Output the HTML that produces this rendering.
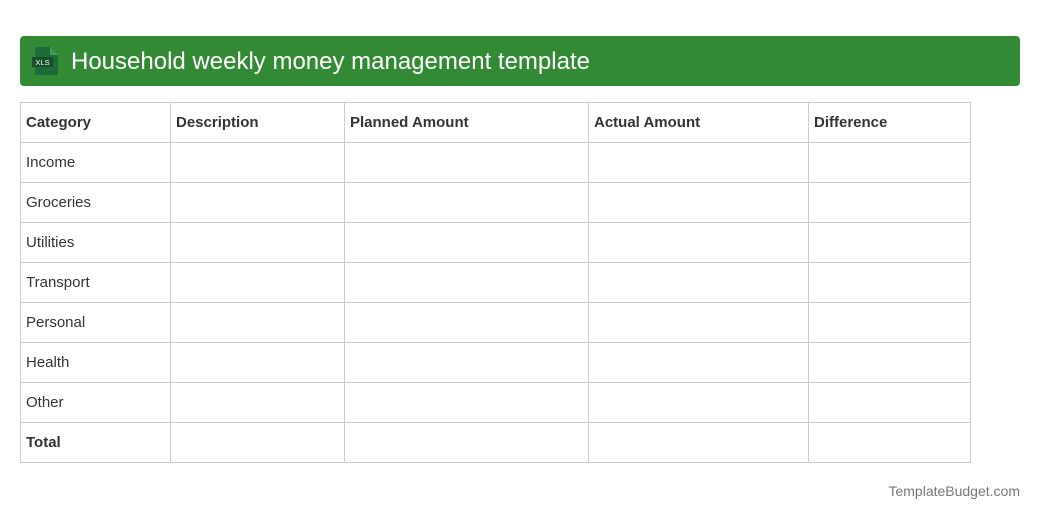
<!DOCTYPE html>
<html><head><meta charset="utf-8"><style>
body{margin:0;width:1040px;height:520px;background:#fff;font-family:"Liberation Sans",sans-serif;position:relative;overflow:hidden}
.hdr{position:absolute;left:20px;top:36px;width:1000px;height:50px;background:#338a34;border-radius:4px}
.hdr .t{position:absolute;left:51px;top:12px;color:#fff;font-size:24px;line-height:28px}
.ic{position:absolute;left:11px;top:10px}
table{position:absolute;left:20px;top:102px;border-collapse:collapse;font-size:15px;color:#333;table-layout:fixed;width:950px}
td{border:1px solid #ccc;height:40px;padding:0 0 0 5px;box-sizing:border-box}
tr{height:40px}
tr:first-child td{font-weight:bold}
.ft{position:absolute;right:20px;top:483px;font-size:14px;color:#777}
</style></head><body>
<div class="hdr">
<svg class="ic" width="30" height="30" viewBox="0 0 30 30"><path d="M4 1h15l8 8v20H4z" fill="#1e6b3a"/><path d="M19 1v8h8z" fill="#3f9a5c"/><rect x="1" y="11" width="21" height="10" fill="#174f2a"/><text x="11.5" y="19" font-size="7.5" fill="#fff" text-anchor="middle" font-family="Liberation Sans">XLS</text></svg>
<div class="t">Household weekly money management template</div></div>
<table>
<colgroup><col style="width:150px"><col style="width:174px"><col style="width:244px"><col style="width:220px"><col style="width:162px"></colgroup>
<tr><td>Category</td><td>Description</td><td>Planned Amount</td><td>Actual Amount</td><td>Difference</td></tr>
<tr><td>Income</td><td></td><td></td><td></td><td></td></tr>
<tr><td>Groceries</td><td></td><td></td><td></td><td></td></tr>
<tr><td>Utilities</td><td></td><td></td><td></td><td></td></tr>
<tr><td>Transport</td><td></td><td></td><td></td><td></td></tr>
<tr><td>Personal</td><td></td><td></td><td></td><td></td></tr>
<tr><td>Health</td><td></td><td></td><td></td><td></td></tr>
<tr><td>Other</td><td></td><td></td><td></td><td></td></tr>
<tr><td><b>Total</b></td><td></td><td></td><td></td><td></td></tr>
</table>
<div class="ft">TemplateBudget.com</div>
</body></html>
